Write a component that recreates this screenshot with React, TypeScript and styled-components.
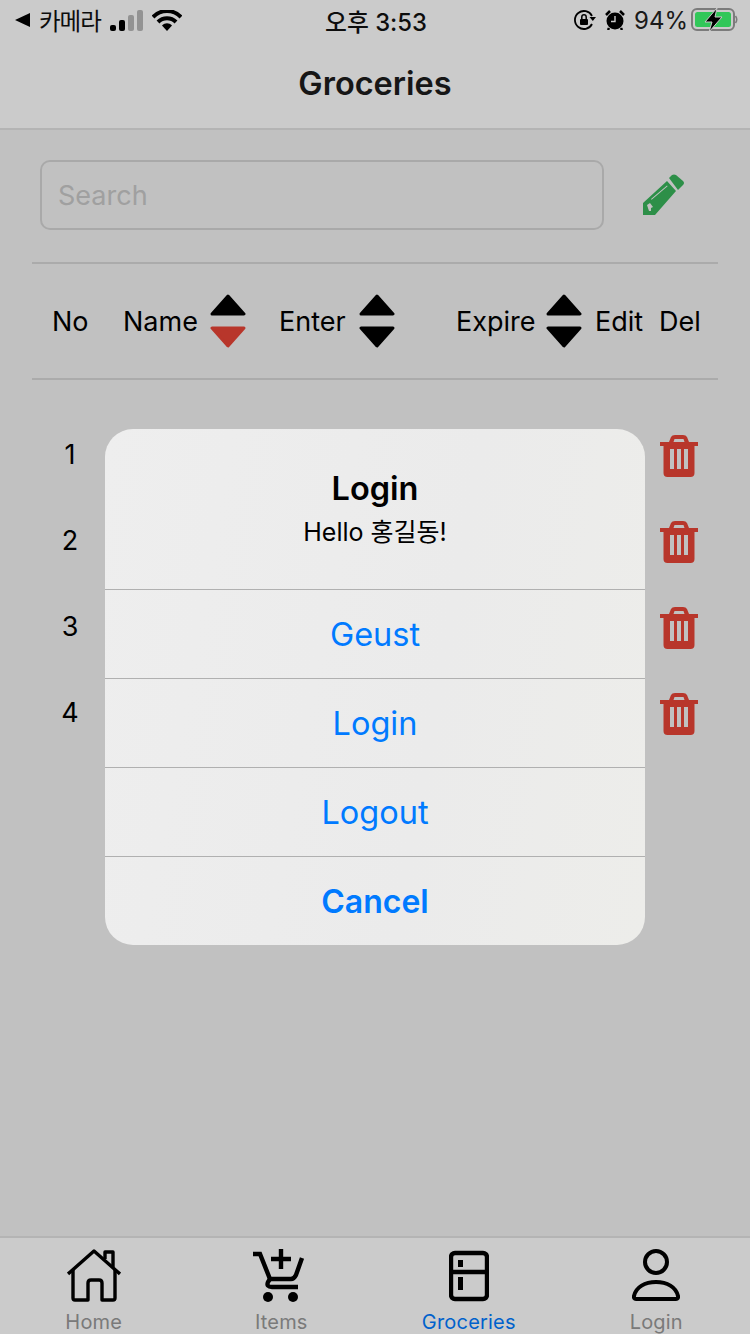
import styled, { createGlobalStyle } from "styled-components";

const GlobalStyle = createGlobalStyle`
  html, body {
    margin: 0;
    padding: 0;
  }
  * {
    box-sizing: border-box;
  }
  body {
    font-family: Inter, "Noto Sans CJK KR", sans-serif;
  }
`;

const Page = styled.div`
  position: relative;
  width: 750px;
  height: 1334px;
  overflow: hidden;
  display: flex;
  flex-direction: column;
  background-color: #f2f2f2;
  color: #000;
`;

const Top = styled.header`
  height: 130px;
  background-color: #fefefe;
  border-bottom: 2px solid #e2e2e2;
`;

const StatusBar = styled.div`
  height: 40px;
  padding: 0 12px 0 15px;
  display: grid;
  grid-template-columns: 1fr auto 1fr;
  align-items: center;
  color: #111;
`;

const StatusSide = styled.div<{ $end?: boolean }>`
  display: flex;
  align-items: center;
  justify-content: ${(p) => (p.$end ? "flex-end" : "flex-start")};
`;

const Carrier = styled.span`
  margin: 0 9px 0 9px;
  font-size: 23.5px;
  letter-spacing: -1px;
`;

const Clock = styled.span`
  margin-right: 1px;
  font-size: 23.8px;
  font-weight: 500;
`;

const Percent = styled.span`
  margin: 0 3px 0 9px;
  font-size: 24px;
  font-weight: 400;
  color: #222;
`;

const Signal = styled.div`
  display: flex;
  align-items: flex-end;
  gap: 3px;
  height: 21px;
  margin-right: 9px;
`;

const SignalBar = styled.span<{ $h: number; $on?: boolean }>`
  width: 6px;
  height: ${(p) => p.$h}px;
  border-radius: 2px;
  background-color: ${(p) => (p.$on ? "#000" : "#b8b8b8")};
`;

const AlarmIcon = styled.svg`
  margin-left: 9px;
`;

const NavTitle = styled.div`
  height: 87px;
  display: flex;
  align-items: center;
  justify-content: center;
  font-size: 32.5px;
  font-weight: 600;
  color: #1c1c1c;
`;

const Content = styled.main`
  flex: 1;
  padding: 30px 32px 0;
`;

const SearchRow = styled.div`
  display: flex;
  align-items: center;
  padding: 0 0 32px 8px;
  border-bottom: 2px solid #d6d6d6;
`;

const SearchBox = styled.div`
  width: 564px;
  height: 70px;
  padding-left: 16px;
  display: flex;
  align-items: center;
  font-size: 27px;
  color: #c8c8c8;
  border: 2px solid #d4d4d4;
  border-radius: 10px;
`;

const EditButton = styled.button`
  margin-left: 39px;
  padding: 0;
  display: flex;
  border: 0;
  background: none;
`;

const TableHead = styled.div`
  height: 116px;
  padding-left: 20px;
  display: grid;
  grid-template-columns: 71px 87px 69px 80px 97px 90px 49px 64px 1fr;
  align-items: center;
  font-size: 27px;
  border-bottom: 2px solid #d6d6d6;
`;

const SortButton = styled.svg`
  display: block;
`;

const List = styled.div`
  padding-top: 31px;
`;

const Row = styled.div`
  height: 86px;
  padding: 0 20px;
  display: flex;
  align-items: flex-start;
  justify-content: space-between;
`;

const RowNo = styled.span`
  width: 36px;
  line-height: 88px;
  text-align: center;
  font-size: 27px;
`;

const TrashIcon = styled.svg`
  margin-top: 24px;
`;

const TabBar = styled.nav`
  height: 98px;
  display: grid;
  grid-template-columns: repeat(4, 1fr);
  background-color: #fefefe;
  border-top: 2px solid #e2e2e2;
`;

const Tab = styled.div<{ $active?: boolean }>`
  display: flex;
  flex-direction: column;
  align-items: center;
  justify-content: flex-end;
  gap: 7px;
  height: 96px;
  font-size: 20px;
  line-height: 24px;
  letter-spacing: 0.2px;
  color: ${(p) => (p.$active ? "#007aff" : "#999")};
`;

const Backdrop = styled.div`
  position: absolute;
  inset: 0;
  display: flex;
  justify-content: center;
  padding-top: 429px;
  background-color: rgba(0, 0, 0, 0.2);
`;

const Sheet = styled.div`
  width: 540px;
  height: 516px;
  overflow: hidden;
  display: flex;
  flex-direction: column;
  border-radius: 28px;
  background: linear-gradient(100deg, #eeeeee, #ebebeb 60%, #ededea);
`;

const SheetHead = styled.div`
  height: 160px;
  padding-top: 38px;
  text-align: center;
`;

const SheetTitle = styled.div`
  font-size: 32.5px;
  line-height: 44px;
  font-weight: 600;
`;

const SheetMessage = styled.div`
  font-size: 25px;
  line-height: 42px;
`;

const SheetAction = styled.button<{ $bold?: boolean }>`
  height: 89px;
  padding: 0;
  border: 0;
  border-top: 1px solid #b0b0b0;
  background: none;
  font-family: inherit;
  font-size: ${(p) => (p.$bold ? 32 : 32.5)}px;
  font-weight: ${(p) => (p.$bold ? 600 : 400)};
  color: #007aff;
`;

function SortIcon({ active }: { active?: boolean }) {
  return (
    <SortButton width="36" height="54" viewBox="0 0 36 54">
      <path d="M18 2 L34 20 H2 Z" fill="#000" stroke="#000" strokeWidth="3" strokeLinejoin="round" />
      <path
        d="M2 34 H34 L18 52 Z"
        fill={active ? "#e74436" : "#000"}
        stroke={active ? "#e74436" : "#000"}
        strokeWidth="3"
        strokeLinejoin="round"
      />
    </SortButton>
  );
}

function Trash() {
  return (
    <TrashIcon width="38" height="42" viewBox="0 0 38 42">
      <path
        fillRule="evenodd"
        fill="#e74436"
        d="M0 7 H9 L11 2 Q12 0 15 0 H23 Q26 0 27 2 L29 7 H38 V11 H34.5 V38 Q34.5 42 30.5 42 H7.5 Q3.5 42 3.5 38 V11 H0 Z M13.5 7 H24.5 L23.5 4 H14.5 Z M10 14 V34 H14 V14 Z M17 14 V34 H21 V14 Z M24 14 V34 H28 V14 Z"
      />
    </TrashIcon>
  );
}

function Pencil() {
  return (
    <svg width="42" height="42" viewBox="0 0 42 42">
      <path
        fill="#39b35b"
        fillRule="evenodd"
        d="M0 29 L24 7 L33 17 L12 41 H0 Z M4 31 L7 29 L10 33 L8 34 L8 37 L6 37 Z M8 25 L24 11.5 L24.6 12.3 L8.6 25.8 Z"
      />
      <path fill="#39b35b" d="M26 4 L29 1 Q31 0 33 1 L40 7 Q42 9 40 11 L35 16 Z" />
    </svg>
  );
}

export default function App() {
  return (
    <Page>
      <GlobalStyle />
      <Top>
        <StatusBar>
          <StatusSide>
            <svg width="15" height="14" viewBox="0 0 15 14">
              <path d="M15 0 V14 L0 7 Z" fill="#000" />
            </svg>
            <Carrier>카메라</Carrier>
            <Signal>
              <SignalBar $h={6} $on />
              <SignalBar $h={11} $on />
              <SignalBar $h={16} />
              <SignalBar $h={21} />
            </Signal>
            <svg width="30" height="21" viewBox="0 0 30 21">
              <path d="M1 7 C9 -1 21 -1 29 7" fill="none" stroke="#000" strokeWidth="4" />
              <path d="M6 12 C11 7 19 7 24 12" fill="none" stroke="#000" strokeWidth="4" />
              <path d="M10 15.5 C13 12.5 17 12.5 20 15.5 L15 21 Z" fill="#000" />
            </svg>
          </StatusSide>
          <Clock>오후 3:53</Clock>
          <StatusSide $end>
            <svg width="22" height="20" viewBox="0 0 22 20">
              <path d="M18 14 A9 9 0 1 1 18 6" fill="none" stroke="#000" strokeWidth="1.8" />
              <path d="M15.5 7 H22 L18.8 11 Z" fill="#000" />
              <rect x="6" y="9" width="8" height="6" rx="1" fill="#000" />
              <path d="M7.8 9 V7 A2.2 2.2 0 0 1 12.2 7 V9" fill="none" stroke="#000" strokeWidth="1.5" />
            </svg>
            <AlarmIcon width="20" height="20" viewBox="0 0 20 20">
              <circle cx="10" cy="11" r="8.5" fill="#000" />
              <path d="M1 5 L5 1 M15 1 L19 5 M4 18 L3 20 M16 18 L17 20" stroke="#000" strokeWidth="2.5" />
              <path d="M10 6 V11.5 H6" fill="none" stroke="#fff" strokeWidth="1.4" />
            </AlarmIcon>
            <Percent>94%</Percent>
            <svg width="47" height="24" viewBox="0 0 47 24">
              <rect x="1" y="1" width="42" height="21" rx="5" fill="none" stroke="#9a9a9a" strokeWidth="2" />
              <rect x="4" y="4" width="36" height="15" rx="2.5" fill="#3ef970" />
              <path d="M44.5 8 Q47 11.5 44.5 15" fill="none" stroke="#9a9a9a" strokeWidth="1.5" />
              <path d="M26 0 L14 14 H21 L18 24 L31 9 H24 Z" fill="#000" stroke="#fefefe" strokeWidth="1" />
            </svg>
          </StatusSide>
        </StatusBar>
        <NavTitle>Groceries</NavTitle>
      </Top>

      <Content>
        <SearchRow>
          <SearchBox>Search</SearchBox>
          <EditButton>
            <Pencil />
          </EditButton>
        </SearchRow>
        <TableHead>
          <span>No</span>
          <span>Name</span>
          <SortIcon active />
          <span>Enter</span>
          <SortIcon />
          <span>Expire</span>
          <SortIcon />
          <span>Edit</span>
          <span>Del</span>
        </TableHead>
        <List>
          {[1, 2, 3, 4].map((no) => (
            <Row key={no}>
              <RowNo>{no}</RowNo>
              <Trash />
            </Row>
          ))}
        </List>
      </Content>

      <TabBar>
        <Tab>
          <svg width="54" height="54" viewBox="0 0 54 54" fill="none" stroke="#000" strokeWidth="3.4" strokeLinejoin="round">
            <path d="M1 25 L27 2 L53 25" />
            <path d="M6 21 V49 Q6 51 8 51 H21 V34 Q21 31 24 31 H32 Q35 31 35 34 V51 H46 Q48 51 48 49 V21" />
            <path d="M38 10 V3 H46 V18" />
          </svg>
          Home
        </Tab>
        <Tab>
          <svg width="56" height="54" viewBox="0 0 56 54" fill="none" stroke="#000" strokeWidth="4.4">
            <path d="M0 5 H7 L17 30 H38 Q41 30 43 26 L49 9" />
            <path d="M17 30 L15 33 Q13 38 19 38 H45" />
            <path d="M28 0 V20 M18 10 H38" />
            <circle cx="15" cy="48" r="5" fill="#000" stroke="none" />
            <circle cx="40" cy="48" r="5" fill="#000" stroke="none" />
          </svg>
          Items
        </Tab>
        <Tab $active>
          <svg width="40" height="54" viewBox="0 0 40 54" fill="none" stroke="#000" strokeWidth="4.4">
            <rect x="2" y="4" width="36" height="46" rx="4" />
            <path d="M2 23 H38" />
            <rect x="9" y="11" width="5" height="7" fill="#000" stroke="none" />
            <rect x="9" y="28" width="5" height="13" fill="#000" stroke="none" />
          </svg>
          Groceries
        </Tab>
        <Tab>
          <svg width="48" height="54" viewBox="0 0 48 54" fill="none" stroke="#000" strokeWidth="4">
            <circle cx="24" cy="13" r="11" />
            <path d="M2 47 C4 38 13 33 24 33 C35 33 44 38 46 47 Q46.5 50 44 50 H4 Q1.5 50 2 47 Z" strokeLinejoin="round" />
          </svg>
          Login
        </Tab>
      </TabBar>

      <Backdrop>
        <Sheet>
          <SheetHead>
            <SheetTitle>Login</SheetTitle>
            <SheetMessage>Hello 홍길동!</SheetMessage>
          </SheetHead>
          <SheetAction>Geust</SheetAction>
          <SheetAction>Login</SheetAction>
          <SheetAction>Logout</SheetAction>
          <SheetAction $bold>Cancel</SheetAction>
        </Sheet>
      </Backdrop>
    </Page>
  );
}
